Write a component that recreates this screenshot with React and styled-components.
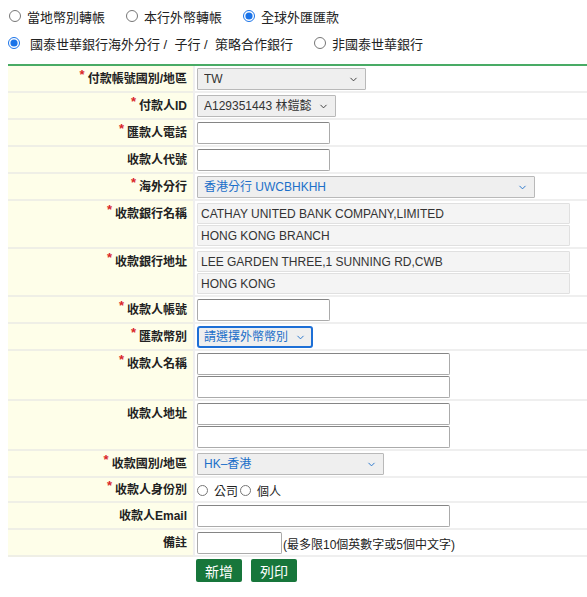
import styled, { createGlobalStyle } from "styled-components";
import { ChevronDown } from "lucide-react";

const Global = createGlobalStyle`
  html, body { margin: 0; padding: 0; background: #fff; overflow: hidden; }
  body {
    padding: 6px 0 0 8px;
    font-family: "Liberation Sans", Arial, "Noto Sans CJK TC", sans-serif;
    color: #222;
  }
`;

const Page = styled.div`
  display: flex;
  flex-direction: column;
`;

const RadioLine = styled.div`
  display: flex;
  align-items: center;
  gap: 20px;
  height: 20px;
  margin-bottom: ${(p) => p.$mb || 0}px;
  font-size: 13px;
`;

const RadioItem = styled.label`
  display: flex;
  align-items: center;
  gap: 4px;
  white-space: pre;
  color: #222;
`;

const Radio = styled.input.attrs({ type: "radio" })`
  margin: 0 ${(p) => p.$gap ?? 2}px 0 ${(p) => p.$lm ?? 1}px;
  width: ${(p) => p.$size || 12}px;
  height: ${(p) => p.$size || 12}px;
  accent-color: #1a73e8;
`;

const Table = styled.div`
  display: grid;
  grid-template-columns: 185px 1fr;
  border-top: 2px solid #49ab65;
`;

const Label = styled.div`
  background: #fefee9;
  border-bottom: 2px solid #efefe6;
  padding: ${(p) => p.$pt ?? 6}px 6px 0 0;
  text-align: right;
  font-size: 12px;
  font-weight: bold;
  line-height: 14px;
  color: #222;
`;

const Star = styled.span`
  color: #d9262a;
  font-size: 13px;
  position: relative;
  top: -4px;
  margin-right: 3px;
`;

const Value = styled.div`
  border-left: 2px solid #efefef;
  border-bottom: 2px solid #efefef;
  padding: ${(p) => p.$pad || "2px 0 1px 2px"};
  display: flex;
  flex-direction: ${(p) => (p.$stack ? "column" : "row")};
  align-items: ${(p) => (p.$stack ? "flex-start" : "center")};
  gap: ${(p) => (p.$stack ? 1 : 0)}px;
  font-size: 12px;
  min-height: ${(p) => p.$h ?? 22}px;
`;

const SelectWrap = styled.div`
  position: relative;
  width: ${(p) => p.$w}px;
  height: 22px;
  color: ${(p) => (p.$blue ? "#1c6fc9" : "#333")};
  svg {
    position: absolute;
    right: 7px;
    top: 6px;
    pointer-events: none;
  }
`;

const Select = styled.select`
  appearance: none;
  box-sizing: border-box;
  width: 100%;
  height: 100%;
  margin: 0;
  padding: 0 18px 0 ${(p) => (p.$focus ? 5 : 6)}px;
  background: #efefef;
  border: ${(p) => (p.$focus ? "2px solid #1d6fd6" : "1px solid #b9b9b9")};
  border-radius: ${(p) => (p.$focus ? 3 : 1)}px;
  font-family: inherit;
  font-size: 12px;
  color: inherit;
  outline: none;
`;

const Input = styled.input`
  box-sizing: border-box;
  width: ${(p) => p.$w}px;
  height: 22px;
  margin: 0;
  border: 1px solid #ababab;
  border-top-color: #858585;
  border-radius: 2px;
  background: #fff;
  font-family: inherit;
  font-size: 12px;
  padding: 0 3px;
`;

const ReadOnly = styled.div`
  box-sizing: border-box;
  width: 373px;
  height: 21px;
  padding: 0 3px;
  display: flex;
  align-items: center;
  background: #f4f4f4;
  border: 1px solid #e0e0e0;
  border-radius: 1px;
  font-size: 12px;
  color: #333;
`;

const Note = styled.span`
  font-size: 12px;
  color: #222;
  margin-left: 1px;
`;

const Buttons = styled.div`
  display: flex;
  gap: 9px;
  padding: 2px 0 0 188px;
`;

const Button = styled.button`
  width: 46px;
  height: 23px;
  padding: 0;
  border: none;
  border-radius: 2px;
  background: #17763b;
  color: #fff;
  font-family: inherit;
  font-size: 14px;
  cursor: pointer;
`;

function Field({ label, required, pt, children, ...rest }) {
  return (
    <>
      <Label $pt={pt}>
        {required && <Star>*</Star>}
        {label}
      </Label>
      <Value {...rest}>{children}</Value>
    </>
  );
}

function Dropdown({ w, blue, focus, text }) {
  return (
    <SelectWrap $w={w} $blue={blue}>
      <Select $focus={focus} defaultValue={text}>
        <option>{text}</option>
      </Select>
      <ChevronDown size={11} strokeWidth={2} />
    </SelectWrap>
  );
}

export default function App() {
  return (
    <Page>
      <Global />
      <RadioLine $mb={7}>
        <RadioItem>
          <Radio name="t" />當地幣別轉帳
        </RadioItem>
        <RadioItem>
          <Radio name="t" />本行外幣轉帳
        </RadioItem>
        <RadioItem>
          <Radio name="t" defaultChecked />全球外匯匯款
        </RadioItem>
      </RadioLine>
      <RadioLine $mb={11}>
        <RadioItem>
          <Radio name="b" $lm={0} $gap={6} defaultChecked />國泰世華銀行海外分行 /  子行 /  策略合作銀行
        </RadioItem>
        <RadioItem>
          <Radio name="b" />非國泰世華銀行
        </RadioItem>
      </RadioLine>

      <Table>
        <Field label="付款帳號國別/地區" required>
          <Dropdown w={169} text="TW" />
        </Field>
        <Field label="付款人ID" required>
          <Dropdown w={139} text="A129351443 林鎧懿" />
        </Field>
        <Field label="匯款人電話" required>
          <Input $w={133} />
        </Field>
        <Field label="收款人代號">
          <Input $w={133} />
        </Field>
        <Field label="海外分行" required>
          <Dropdown w={338} blue text="香港分行 UWCBHKHH" />
        </Field>
        <Field label="收款銀行名稱" required $stack>
          <ReadOnly>CATHAY UNITED BANK COMPANY,LIMITED</ReadOnly>
          <ReadOnly>HONG KONG BRANCH</ReadOnly>
        </Field>
        <Field label="收款銀行地址" required $stack>
          <ReadOnly>LEE GARDEN THREE,1 SUNNING RD,CWB</ReadOnly>
          <ReadOnly>HONG KONG</ReadOnly>
        </Field>
        <Field label="收款人帳號" required>
          <Input $w={133} />
        </Field>
        <Field label="匯款幣別" required>
          <Dropdown w={116} blue focus text="請選擇外幣幣別" />
        </Field>
        <Field label="收款人名稱" required $stack>
          <Input $w={253} />
          <Input $w={253} />
        </Field>
        <Field label="收款人地址" $stack>
          <Input $w={253} />
          <Input $w={253} />
        </Field>
        <Field label="收款國別/地區" required>
          <Dropdown w={187} blue text="HK–香港" />
        </Field>
        <Field label="收款人身份別" required pt={5} $pad="4px 0 2px 0" $h={14}>
          <RadioItem>
            <Radio name="id" $size={11} $lm={2} />公司
          </RadioItem>
          <RadioItem>
            <Radio name="id" $size={11} $lm={2} />個人
          </RadioItem>
        </Field>
        <Field label="收款人Email">
          <Input $w={253} />
        </Field>
        <Field label="備註">
          <Input $w={85} />
          <Note>(最多限10個英數字或5個中文字)</Note>
        </Field>
      </Table>

      <Buttons>
        <Button>新增</Button>
        <Button>列印</Button>
      </Buttons>
    </Page>
  );
}
